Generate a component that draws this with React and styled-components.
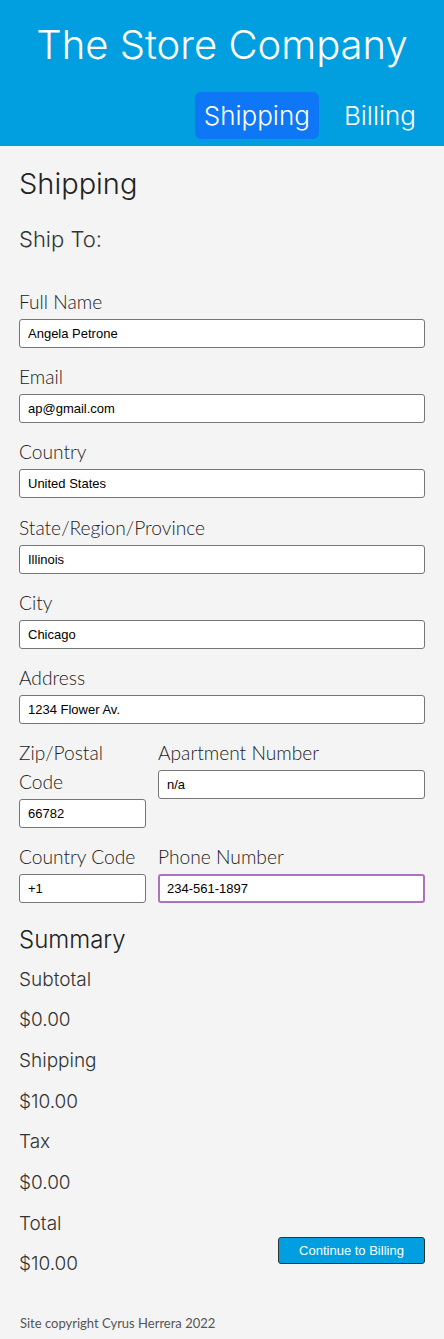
import styled, { createGlobalStyle } from "styled-components";

const GlobalStyle = createGlobalStyle`
  body {
    margin: 0;
    background: #f4f4f4;
    font-family: Lato, "Liberation Sans", sans-serif;
  }
`;

const Header = styled.header`
  background: #019fe0;
  padding: 18px 0 7px;
`;

const Title = styled.h1`
  margin: 0;
  font: 300 40px/54px Inter, "Liberation Sans", sans-serif;
  color: #fff;
  text-align: center;
`;

const Nav = styled.nav`
  display: flex;
  justify-content: flex-end;
  gap: 16px;
  margin-top: 20px;
  padding-right: 19px;
`;

const NavLink = styled.a`
  display: flex;
  align-items: center;
  height: 47px;
  padding: 0 9px;
  border-radius: 6px;
  font: 300 26px Inter, "Liberation Sans", sans-serif;
  color: #fff;
  background: ${(p) => (p.$active ? "#0d77f5" : "transparent")};
`;

const Main = styled.main`
  padding: 0 19px;
`;

const PageTitle = styled.h2`
  margin: 20px 0 0;
  font: 300 29px/36px Inter, "Liberation Sans", sans-serif;
  color: #222;
`;

const SubTitle = styled.h3`
  margin: 22px 0 33px;
  font: 300 22px/30px Inter, "Liberation Sans", sans-serif;
  color: #333;
`;

const Field = styled.div`
  display: flex;
  flex-direction: column;
  margin-bottom: 14.2px;
`;

const Label = styled.label`
  font: 300 19.2px/29px Lato, "Liberation Sans", sans-serif;
  color: #222;
  margin-bottom: 3px;
`;

const Input = styled.input`
  box-sizing: border-box;
  width: 100%;
  height: 29px;
  margin: 0;
  padding: 0 ${(p) => (p.$focused ? "7px" : "8px")};
  border: ${(p) => (p.$focused ? "2px solid #ad72bd" : "1px solid #767676")};
  border-radius: 3px;
  background: #fff;
  font: 13px "Liberation Sans", Arial, sans-serif;
  color: #000;
`;

const Row = styled.div`
  display: grid;
  grid-template-columns: 127px 1fr;
  column-gap: 12px;
  align-items: start;
`;

const SummaryTitle = styled.h3`
  margin: 2px 0 0;
  font: 300 24px/40px Inter, "Liberation Sans", sans-serif;
  color: #222;
`;

const SummaryWrap = styled.div`
  display: flex;
  justify-content: space-between;
  align-items: flex-end;
`;

const SummaryList = styled.div`
  display: flex;
  flex-direction: column;
`;

const SummaryItem = styled.p`
  margin: 0;
  font: 300 19px/40.7px Inter, "Liberation Sans", sans-serif;
  color: #333;
`;

const Button = styled.button`
  width: 147px;
  height: 27px;
  margin-bottom: 21px;
  border: 1px solid #333;
  border-radius: 3px;
  background: #019fe0;
  color: #fff;
  font: 13px "Liberation Sans", Arial, sans-serif;
`;

const Footer = styled.footer`
  padding: 30px 20px 8px;
  font: 13px/16px Lato, "Liberation Sans", sans-serif;
  color: #555;
`;

const fields = [
  ["Full Name", "Angela Petrone"],
  ["Email", "ap@gmail.com"],
  ["Country", "United States"],
  ["State/Region/Province", "Illinois"],
  ["City", "Chicago"],
  ["Address", "1234 Flower Av."],
];

const summary = [
  ["Subtotal", "$0.00"],
  ["Shipping", "$10.00"],
  ["Tax", "$0.00"],
  ["Total", "$10.00"],
];

const App = () => {
  return (
    <>
      <GlobalStyle />
      <Header>
        <Title>The Store Company</Title>
        <Nav>
          <NavLink $active>Shipping</NavLink>
          <NavLink>Billing</NavLink>
        </Nav>
      </Header>
      <Main>
        <PageTitle>Shipping</PageTitle>
        <SubTitle>Ship To:</SubTitle>
        {fields.map(([label, value]) => (
          <Field key={label}>
            <Label>{label}</Label>
            <Input defaultValue={value} />
          </Field>
        ))}
        <Row>
          <Field>
            <Label>Zip/Postal Code</Label>
            <Input defaultValue="66782" />
          </Field>
          <Field>
            <Label>Apartment Number</Label>
            <Input defaultValue="n/a" />
          </Field>
        </Row>
        <Row>
          <Field>
            <Label>Country Code</Label>
            <Input defaultValue="+1" />
          </Field>
          <Field>
            <Label>Phone Number</Label>
            <Input defaultValue="234-561-1897" $focused />
          </Field>
        </Row>
        <SummaryTitle>Summary</SummaryTitle>
        <SummaryWrap>
          <SummaryList>
            {summary.map(([name, amount]) => (
              <div key={name}>
                <SummaryItem>{name}</SummaryItem>
                <SummaryItem>{amount}</SummaryItem>
              </div>
            ))}
          </SummaryList>
          <Button>Continue to Billing</Button>
        </SummaryWrap>
      </Main>
      <Footer>Site copyright Cyrus Herrera 2022</Footer>
    </>
  );
};

export default App;
